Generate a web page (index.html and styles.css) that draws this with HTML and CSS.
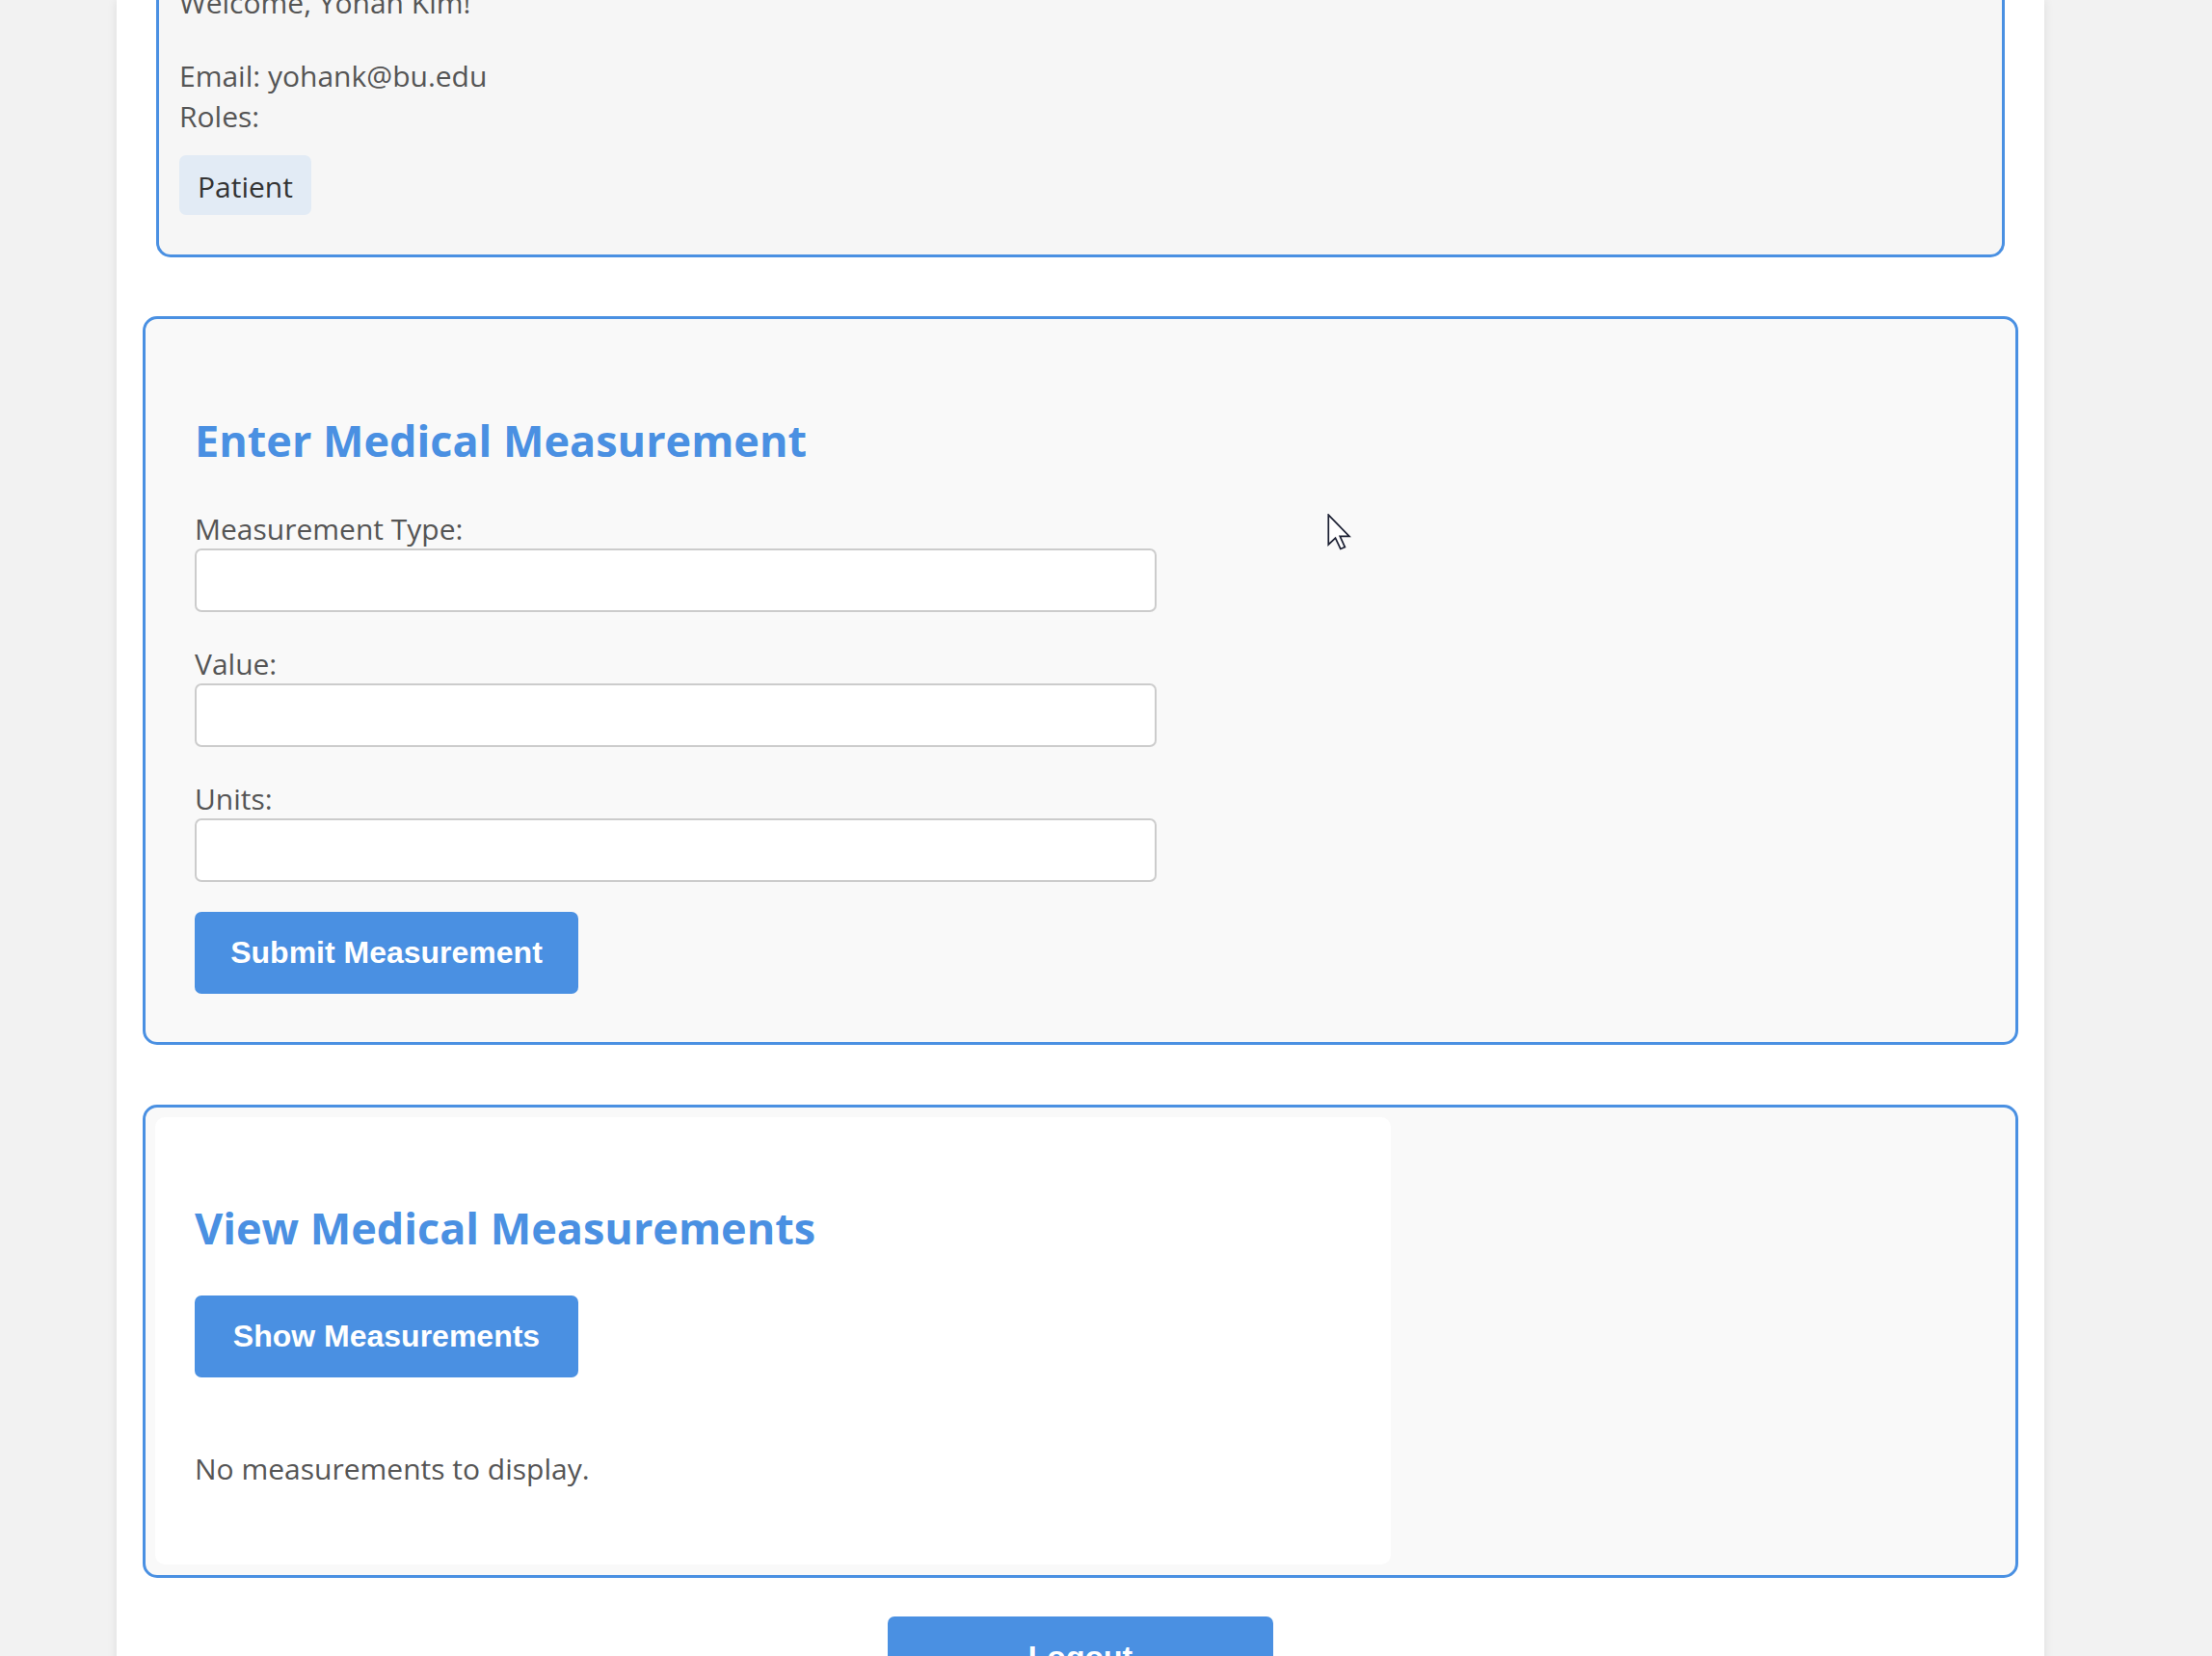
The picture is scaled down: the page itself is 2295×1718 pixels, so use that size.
FILE: index.html
```html
<!DOCTYPE html>
<html lang="en">
<head>
<meta charset="utf-8">
<title>Patient Dashboard</title>
<link rel="stylesheet" href="styles.css">
</head>
<body>
<div class="container">
  <section class="card profile">
    <p class="welcome">Welcome, Yohan Kim!</p>
    <p class="info">Email: yohank@bu.edu<br>Roles:</p>
    <div class="roles"><span class="badge">Patient</span></div>
  </section>

  <section class="card entry">
    <h2>Enter Medical Measurement</h2>
    <form class="form">
      <div class="field">
        <label for="mtype">Measurement Type:</label>
        <input id="mtype" type="text">
      </div>
      <div class="field">
        <label for="mvalue">Value:</label>
        <input id="mvalue" type="text">
      </div>
      <div class="field">
        <label for="munits">Units:</label>
        <input id="munits" type="text">
      </div>
      <button type="button" class="btn">Submit Measurement</button>
    </form>
  </section>

  <section class="card view">
    <div class="panel">
      <h2>View Medical Measurements</h2>
      <button type="button" class="btn">Show Measurements</button>
      <p class="empty">No measurements to display.</p>
    </div>
  </section>

  <div class="logout-row">
    <button type="button" class="btn logout">Logout</button>
  </div>
</div>

<svg class="cursor" width="25" height="38" viewBox="0 0 13 20" aria-hidden="true">
  <path d="M0.6 0.6 L0.6 16.8 L4.4 13.2 L7.2 19.2 L9.6 18.2 L6.9 12.3 L12 12.3 Z" fill="#ffffff" stroke="#1c2033" stroke-width="0.9" stroke-linejoin="miter"/>
</svg>
</body>
</html>
```

FILE: styles.css
```css
html, body {
  margin: 0;
  padding: 0;
}

body {
  background: #f2f2f2;
  font-family: "Open Sans", "Noto Sans", sans-serif;
  color: #555;
  overflow: hidden;
}

.container {
  display: flow-root;
  width: 2000px;
  margin-left: 121px;
  min-height: 1800px;
  box-sizing: border-box;
  padding: 0 27px 60px;
  background: #ffffff;
  box-shadow: 0 0 10px rgba(0, 0, 0, 0.09);
}

.card {
  border: 3px solid #4a90e2;
  border-radius: 15px;
}

/* profile card */
.profile {
  margin: -41px 14px 0;
  padding: 20px 21px 41px;
  background: #f6f6f6;
}

.profile p {
  margin: 0;
  font-size: 30px;
  line-height: 42.6px;
  color: #555;
}

.profile .welcome {
  margin-bottom: 33px;
}

.roles {
  display: flex;
  margin-top: 18px;
}

.badge {
  display: block;
  padding: 12px 19px 8px;
  border-radius: 7px;
  background: #e2ebf5;
  color: #333;
  font-size: 30px;
  line-height: 42px;
}

/* section headings */
h2 {
  margin: 49px 0 43px;
  font-size: 45px;
  line-height: 57.2px;
  font-weight: 700;
  color: #4a90e2;
}

/* entry card */
.entry {
  margin-top: 61px;
  padding: 48px 51px 50px;
  background: #f9f9f9;
}

.field {
  margin-bottom: 33px;
}

.field:last-of-type {
  margin-bottom: 31px;
}

.field label {
  display: block;
  font-size: 30px;
  line-height: 41px;
  color: #555;
}

.field input {
  display: block;
  width: 998px;
  height: 66px;
  margin: 0;
  padding: 0 16px;
  box-sizing: border-box;
  border: 2px solid #cccccc;
  border-radius: 7px;
  background: #ffffff;
  font: inherit;
}

.btn {
  display: block;
  width: 398px;
  height: 85px;
  margin: 0;
  padding: 0;
  border: 0;
  border-radius: 7px;
  background: #4a90e2;
  color: #ffffff;
  font-family: "Liberation Sans", Arial, sans-serif;
  font-weight: 700;
  font-size: 32px;
  line-height: 37px;
  text-align: center;
  cursor: pointer;
}

/* view card */
.view {
  margin-top: 62px;
  padding: 10px 10px 11px;
  background: #f9f9f9;
}

.panel {
  width: 1282px;
  box-sizing: border-box;
  padding: 37px 41px 77px;
  border-radius: 10px;
  background: #ffffff;
}

.panel h2 {
  margin: 49px 0 42px;
}

.empty {
  margin: 74px 0 0;
  font-size: 30px;
  line-height: 42.6px;
  color: #555;
}

/* logout */
.logout-row {
  display: flex;
  justify-content: center;
  margin-top: 40px;
}

.logout {
  width: 400px;
}

/* mouse pointer overlay */
.cursor {
  position: absolute;
  left: 1377px;
  top: 533px;
}
```
